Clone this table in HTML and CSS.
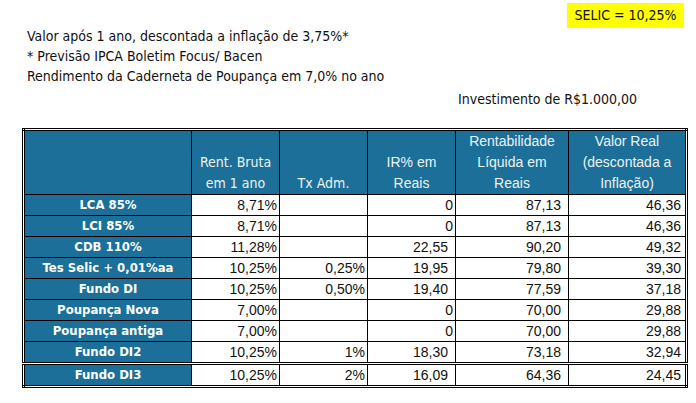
FILE: index.html
```html
<!DOCTYPE html>
<html lang="pt-BR">
<head>
<meta charset="utf-8">
<title>Investimentos</title>
<link rel="stylesheet" href="styles.css">
</head>
<body>
<div class="page">
  <div class="selic-row"><span class="selic">SELIC = 10,25%</span></div>
  <div class="notes">
    <p>Valor após 1 ano, descontada a inflação de 3,75%*</p>
    <p>* Previsão IPCA Boletim Focus/ Bacen</p>
    <p>Rendimento da Caderneta de Poupança em 7,0% no ano</p>
  </div>
  <div class="invest">Investimento de R$1.000,00</div>
  <table class="grid">
    <colgroup>
      <col class="c1"><col class="c2"><col class="c3"><col class="c4"><col class="c5"><col class="c6">
    </colgroup>
    <thead>
      <tr>
        <th></th>
        <th class="narrow">Rent. Bruta<br>em 1 ano</th>
        <th class="narrow">Tx Adm.</th>
        <th>IR% em<br>Reais</th>
        <th>Rentabilidade<br>Líquida em<br>Reais</th>
        <th>Valor Real<br>(descontada a<br>Inflação)</th>
      </tr>
    </thead>
    <tbody>
      <tr><th class="lbl">LCA 85%</th><td>8,71%</td><td></td><td>0</td><td class="p7">87,13</td><td class="p4">46,36</td></tr>
      <tr><th class="lbl">LCI 85%</th><td>8,71%</td><td></td><td>0</td><td class="p7">87,13</td><td class="p4">46,36</td></tr>
      <tr><th class="lbl">CDB 110%</th><td>11,28%</td><td></td><td class="p7">22,55</td><td class="p7">90,20</td><td class="p4">49,32</td></tr>
      <tr><th class="lbl">Tes Selic + 0,01%aa</th><td>10,25%</td><td>0,25%</td><td class="p7">19,95</td><td class="p7">79,80</td><td class="p4">39,30</td></tr>
      <tr><th class="lbl">Fundo DI</th><td>10,25%</td><td>0,50%</td><td class="p7">19,40</td><td class="p7">77,59</td><td class="p4">37,18</td></tr>
      <tr><th class="lbl">Poupança Nova</th><td>7,00%</td><td></td><td>0</td><td class="p7">70,00</td><td class="p4">29,88</td></tr>
      <tr><th class="lbl">Poupança antiga</th><td>7,00%</td><td></td><td>0</td><td class="p7">70,00</td><td class="p4">29,88</td></tr>
      <tr><th class="lbl">Fundo DI2</th><td>10,25%</td><td>1%</td><td class="p7">18,30</td><td class="p7">73,18</td><td class="p4">32,94</td></tr>
      <tr class="last"><th class="lbl">Fundo DI3</th><td>10,25%</td><td>2%</td><td class="p7">16,09</td><td class="p7">64,36</td><td class="p4">24,45</td></tr>
    </tbody>
  </table>
</div>
</body>
</html>
```

FILE: styles.css
```css
html, body {
  margin: 0;
  padding: 0;
  background: #ffffff;
}

.page {
  width: 696px;
  height: 403px;
  overflow: hidden;
  font-family: "DejaVu Sans Condensed", "Liberation Sans", sans-serif;
  color: #111;
}

.selic-row {
  display: flex;
  justify-content: flex-end;
  padding: 3px 12px 0 0;
}

.selic {
  display: block;
  background: #ffff00;
  width: 117px;
  height: 25px;
  line-height: 25px;
  text-align: center;
  font-size: 14px;
}

.notes {
  margin-top: -2px;
  padding-left: 27px;
  font-size: 14px;
}

.notes p {
  margin: 0;
  line-height: 20px;
}

.invest {
  padding-left: 458px;
  padding-top: 3px;
  font-size: 14px;
  line-height: 20px;
}

.grid {
  margin: 19px 0 0 22px;
  width: 663px;
  table-layout: fixed;
  border-collapse: collapse;
  border: 3px double #000;
  font-family: "Liberation Sans", Arial, sans-serif;
  font-size: 14px;
}

.c1 { width: 168px; }
.c2 { width: 88px; }
.c3 { width: 88px; }
.c4 { width: 88px; }
.c5 { width: 113px; }
.c6 { width: 118px; }

.grid th,
.grid td {
  border: 1px solid #000;
  padding: 0 2px 0 2px;
  height: 20px;
  line-height: 20px;
  white-space: nowrap;
  overflow: hidden;
}

.grid thead th {
  background: #1b6f98;
  color: #eef3f6;
  font-weight: normal;
  vertical-align: bottom;
  text-align: center;
  height: 60px;
  line-height: 21px;
  padding-bottom: 0;
}

.grid thead th.narrow {
  font-family: "DejaVu Sans Condensed", "Liberation Sans", sans-serif;
  font-size: 14px;
}

.grid td {
  text-align: right;
  vertical-align: bottom;
  color: #111;
  background: #fff;
}

.grid th.lbl {
  background: #1b6f98;
  color: #ffffff;
  font-family: "DejaVu Sans Condensed", "Liberation Sans", sans-serif;
  font-weight: bold;
  font-size: 13px;
  text-align: center;
}

.grid td.p7 { padding-right: 7px; }
.grid td.p4 { padding-right: 4px; }

.grid tr.last th,
.grid tr.last td {
  border-top: 3px double #000;
}
```
